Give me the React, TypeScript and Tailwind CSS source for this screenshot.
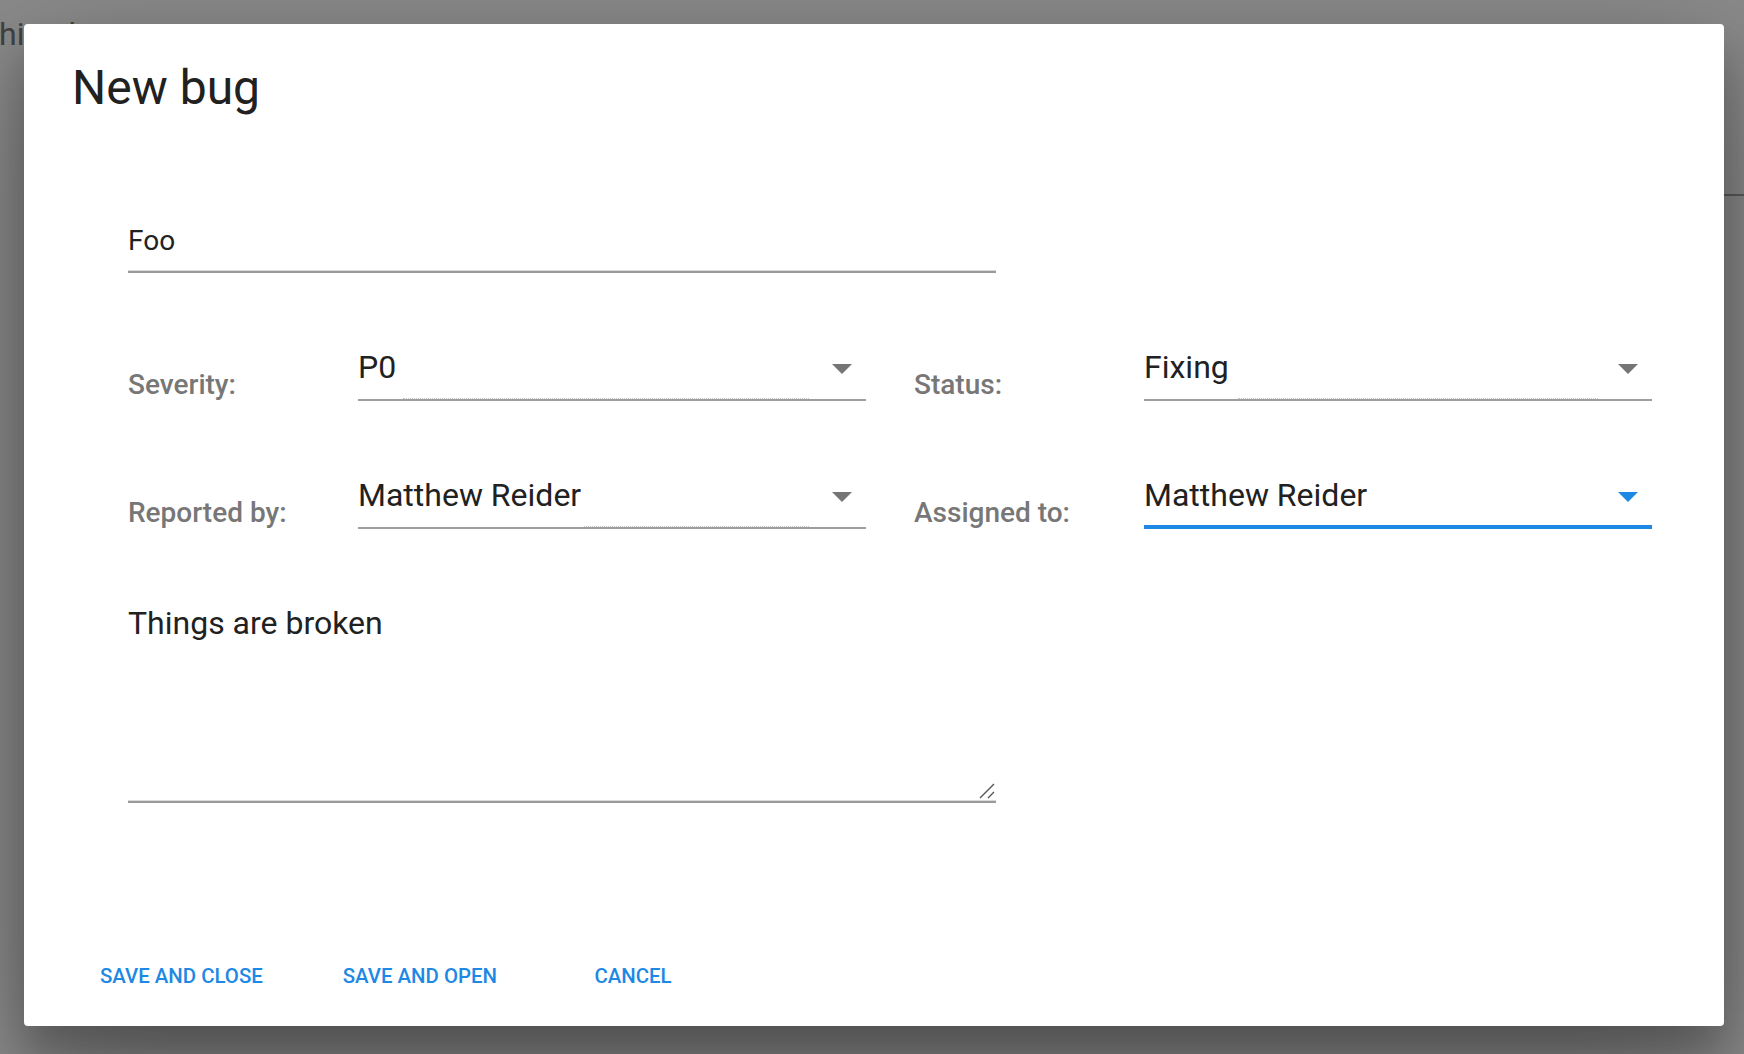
import React from 'react';

const ArrowIcon: React.FC<{ color: string }> = ({ color }): React.ReactElement => (
  <svg width="48" height="48" viewBox="0 0 24 24" className="absolute right-0 top-[-6px]">
    <path d="M7 10l5 5 5-5z" fill={color} />
  </svg>
);

const SelectField: React.FC<{
  value: string;
  dotted?: [number, number];
  focused?: boolean;
}> = ({ value, dotted, focused }): React.ReactElement => {
  return (
    <div className="relative w-[508px] flex flex-col">
      <div className="h-[32px] mt-[1px] text-[32px] leading-none text-[#212121]">{value}</div>
      <ArrowIcon color={focused ? '#1e88e5' : '#757575'} />
      <div className="relative h-[3px] mt-[15px]">
        {dotted && (
          <div
            className="absolute top-0 h-px border-t border-dotted border-[#c4c4c4]"
            style={{ left: dotted[0], width: dotted[1] - dotted[0] }}
          />
        )}
        <div className="absolute bottom-0 left-0 right-0 h-[2px] bg-[#9e9e9e]" />
        {focused && <div className="absolute bottom-0 left-0 right-0 h-[4px] bg-[#1e88e5]" />}
      </div>
    </div>
  );
};

const Label: React.FC<{ text: string }> = ({ text }): React.ReactElement => (
  <div className="w-[230px] mt-[21px] h-[28px] text-[28px] leading-none font-medium text-[#777777]">{text}</div>
);

const Underline: React.FC = (): React.ReactElement => (
  <div className="flex flex-col">
    <div className="h-px bg-[#d9d9d9]" />
    <div className="h-[2px] bg-[#9a9a9a]" />
  </div>
);

const buttons = ['SAVE AND CLOSE', 'SAVE AND OPEN', 'CANCEL'];

const App: React.FC = (): React.ReactElement => {
  return (
    <div className="relative h-[1054px] w-full overflow-hidden bg-white font-['Roboto',sans-serif]">
      {/* page behind the dialog */}
      <div className="flex flex-col">
        <div className="mt-[18px] h-[32px] text-[32px] leading-none text-[#7a7a7a] ml-[-1px]">hirsch</div>
        <div className="mt-[144px] ml-auto w-[600px] h-[2px] bg-[#a8a8a8]" />
      </div>

      <div className="absolute inset-0 bg-black/[0.46]" />

      <div className="absolute inset-0 p-[24px]">
        <div className="flex h-[1002px] w-[1700px] flex-col rounded-[4px] bg-white shadow-[0_38px_120px_rgba(0,0,0,0.3),0_30px_40px_rgba(0,0,0,0.22)]">
          <h1 className="mt-[40px] pl-[48px] h-[48px] text-[48px] leading-none font-normal text-[#212121]">New bug</h1>

          <div className="flex flex-col pl-[104px]">
            {/* title field */}
            <div className="mt-[114px] w-[868px] flex flex-col">
              <div className="h-[28px] mt-[1px] text-[28px] leading-none text-[#212121]">Foo</div>
              <div className="mt-[15px]">
                <Underline />
              </div>
            </div>

            <div className="mt-[77px] flex items-start">
              <Label text="Severity:" />
              <SelectField value="P0" dotted={[45, 451]} />
              <div className="ml-[48px] flex items-start">
                <Label text="Status:" />
                <SelectField value="Fixing" dotted={[94, 454]} />
              </div>
            </div>

            <div className="mt-[77px] flex items-start">
              <Label text="Reported by:" />
              <SelectField value="Matthew Reider" dotted={[226, 451]} />
              <div className="ml-[48px] flex items-start">
                <Label text="Assigned to:" />
                <SelectField value="Matthew Reider" focused />
              </div>
            </div>

            {/* description */}
            <div className="mt-[76px] w-[868px] flex flex-col">
              <div className="relative h-[195px]">
                <div className="h-[32px] mt-[2px] text-[32px] leading-none text-[#212121]">Things are broken</div>
                <svg width="16" height="16" viewBox="0 0 16 16" className="absolute right-[1px] bottom-[1px]">
                  <path d="M1 15L15 1M9 15L15 9" stroke="#555" strokeWidth="1.4" fill="none" />
                </svg>
              </div>
              <Underline />
            </div>
          </div>

          <div className="mt-auto mb-[14px] pl-[44px] flex gap-[16px]">
            {buttons.map((b) => (
              <button
                key={b}
                className="h-[72px] min-w-[176px] px-[32px] text-[20.4px] leading-none font-medium text-[#1e88e5]"
              >
                {b}
              </button>
            ))}
          </div>
        </div>
      </div>
    </div>
  );
};

export default App;
